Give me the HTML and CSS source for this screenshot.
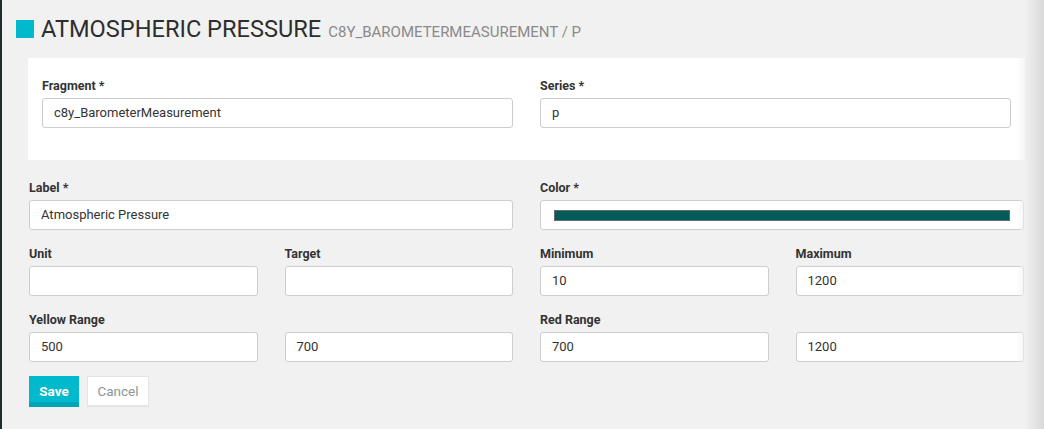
FILE: index.html
```html
<!DOCTYPE html>
<html>
<head>
<meta charset="utf-8">
<link rel="stylesheet" href="styles.css">
</head>
<body>
<div class="page">
  <h1 class="title"><span class="title-mark"></span><span class="title-main">ATMOSPHERIC PRESSURE</span><span class="title-sub">C8Y_BAROMETERMEASUREMENT / P</span></h1>
  <div class="content">
    <div class="panel">
      <div class="field">
        <label class="lbl">Fragment *</label>
        <div class="input">c8y_BarometerMeasurement</div>
      </div>
      <div class="field">
        <label class="lbl">Series *</label>
        <div class="input">p</div>
      </div>
    </div>
    <div class="grid">
      <div class="field span2">
        <label class="lbl">Label *</label>
        <div class="input">Atmospheric Pressure</div>
      </div>
      <div class="field span2">
        <label class="lbl">Color *</label>
        <div class="input color-input"><span class="swatch"></span></div>
      </div>
      <div class="field">
        <label class="lbl">Unit</label>
        <div class="input"></div>
      </div>
      <div class="field">
        <label class="lbl">Target</label>
        <div class="input"></div>
      </div>
      <div class="field">
        <label class="lbl">Minimum</label>
        <div class="input">10</div>
      </div>
      <div class="field">
        <label class="lbl">Maximum</label>
        <div class="input">1200</div>
      </div>
      <div class="field">
        <label class="lbl">Yellow Range</label>
        <div class="input">500</div>
      </div>
      <div class="field">
        <label class="lbl">&nbsp;</label>
        <div class="input">700</div>
      </div>
      <div class="field">
        <label class="lbl">Red Range</label>
        <div class="input">700</div>
      </div>
      <div class="field">
        <label class="lbl">&nbsp;</label>
        <div class="input">1200</div>
      </div>
    </div>
    <div class="actions">
      <button class="btn btn-save">Save</button>
      <button class="btn btn-cancel">Cancel</button>
    </div>
  </div>
  <div class="edge-shade"></div>
</div>
</body>
</html>
```
FILE: styles.css
```css
html, body {
  margin: 0;
  padding: 0;
}
body {
  background: #f1f1f1;
  font-family: Roboto, "Liberation Sans", sans-serif;
  color: #333;
  overflow: hidden;
}
.page {
  position: relative;
  width: 1044px;
  height: 429px;
  box-sizing: border-box;
  border-left: 2px solid #1f2b2f;
  overflow: hidden;
}
.title {
  margin: 0;
  padding: 18px 0 0 14px;
  display: flex;
  align-items: baseline;
  height: 40px;
  box-sizing: border-box;
  font-weight: 400;
}
.title-mark {
  display: inline-block;
  width: 18px;
  height: 18px;
  background: #00b9cd;
  margin-right: 7px;
  align-self: flex-start;
  margin-top: 2px;
}
.title-main {
  font-size: 23.6px;
  line-height: 22px;
  color: #2e2e2e;
  letter-spacing: 0;
}
.title-sub {
  font-size: 15px;
  color: #8a8a8a;
  margin-left: 7px;
  letter-spacing: 0;
}
.content {
  margin-left: 27px;
  width: 995px;
  padding-top: 18px;
}
.panel {
  background: #fff;
  margin: 0 -1px;
  padding: 20px 14px 32px 14px;
  display: grid;
  grid-template-columns: 1fr 1fr;
  column-gap: 27px;
}
.grid {
  display: grid;
  grid-template-columns: repeat(4, 1fr);
  column-gap: 27px;
  row-gap: 16px;
  margin-top: 20px;
}
.span2 {
  grid-column: span 2;
}
.field {
  display: flex;
  flex-direction: column;
}
.lbl {
  font-size: 12.5px;
  font-weight: 700;
  line-height: 16px;
  height: 16px;
  margin-bottom: 4px;
  color: #333;
}
.input {
  height: 30px;
  box-sizing: border-box;
  background: #fff;
  border: 1px solid #cdcdcd;
  border-radius: 3px;
  padding: 0 11px;
  font-size: 13px;
  line-height: 28px;
  color: #333;
}
.color-input {
  display: flex;
  align-items: center;
  padding: 0 13px;
}
.swatch {
  display: block;
  flex: 1;
  height: 11px;
  background: #005c5b;
  border: 1px solid #6a6a6a;
  box-sizing: border-box;
}
.actions {
  display: flex;
  gap: 8px;
  margin-top: 14px;
}
.btn {
  font-family: Roboto, "Liberation Sans", sans-serif;
  font-size: 13.5px;
  height: 31px;
  box-sizing: border-box;
  border-radius: 0;
  cursor: pointer;
  padding: 0;
}
.btn-save {
  width: 50px;
  background: #00b9cd;
  color: #fff;
  font-weight: 700;
  border: none;
  border-bottom: 5px solid #00a6b8;
  padding-top: 4px;
}
.btn-cancel {
  width: 62px;
  background: #fff;
  color: #8a9497;
  border: 1px solid #e4e4e4;
  border-bottom: 2px solid #e4e4e4;
}
.edge-shade {
  position: absolute;
  top: 0;
  right: 0;
  width: 28px;
  height: 100%;
  background: linear-gradient(to right, rgba(241,241,241,0) 0%, rgba(241,241,241,0.6) 30%, rgba(215,215,215,0.9) 100%);
  pointer-events: none;
}
```
